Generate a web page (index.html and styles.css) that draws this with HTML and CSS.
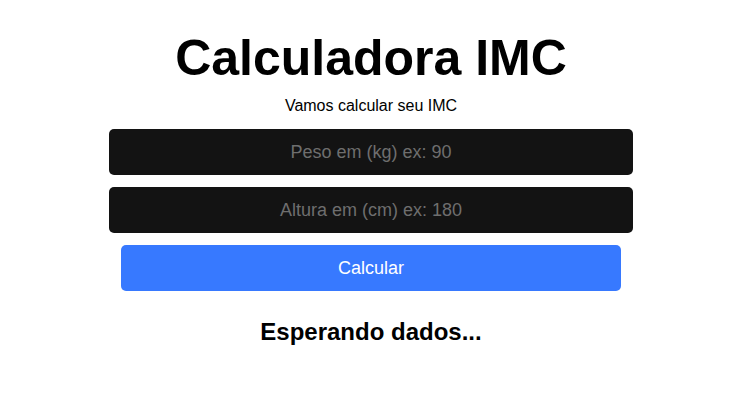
FILE: index.html
```html
<!DOCTYPE html>
<html lang="pt-BR">
<head>
<meta charset="utf-8">
<title>Calculadora IMC</title>
<link rel="stylesheet" href="styles.css">
</head>
<body>
<main class="app">
  <h1 class="title">Calculadora IMC</h1>
  <p class="subtitle">Vamos calcular seu IMC</p>
  <input class="field" type="number" placeholder="Peso em (kg) ex: 90">
  <input class="field" type="number" placeholder="Altura em (cm) ex: 180">
  <button class="btn" type="button">Calcular</button>
  <h2 class="result">Esperando dados...</h2>
</main>
</body>
</html>
```
FILE: styles.css
```css
html, body {
  margin: 0;
  padding: 0;
  background: #ffffff;
}
body {
  font-family: "Liberation Sans", Arial, sans-serif;
  color: #000;
}
.app {
  width: 524px;
  margin: 0 0 0 109px;
  display: flex;
  flex-direction: column;
  align-items: center;
  padding-top: 30px;
}
.title {
  margin: 0;
  font-size: 50px;
  font-weight: bold;
  line-height: 56px;
}
.subtitle {
  margin: 11px 0 0;
  font-size: 16px;
  line-height: 18px;
}
.field {
  box-sizing: border-box;
  width: 524px;
  height: 46px;
  margin-top: 12px;
  border: none;
  border-radius: 5px;
  background: #131313;
  color: #ddd;
  font-family: "Liberation Sans", Arial, sans-serif;
  font-size: 18px;
  text-align: center;
  outline: none;
  -moz-appearance: textfield;
}
.subtitle + .field { margin-top: 14px; }
.field::placeholder { color: #6e6e6e; }
.field::-webkit-outer-spin-button,
.field::-webkit-inner-spin-button { -webkit-appearance: none; margin: 0; }
.btn {
  box-sizing: border-box;
  width: 500px;
  height: 46px;
  margin-top: 12px;
  border: none;
  border-radius: 5px;
  background: #3779ff;
  color: #fff;
  font-family: "Liberation Sans", Arial, sans-serif;
  font-size: 18px;
  cursor: pointer;
}
.result {
  margin: 27px 0 0;
  font-size: 24px;
  font-weight: bold;
  line-height: 27px;
}
```
